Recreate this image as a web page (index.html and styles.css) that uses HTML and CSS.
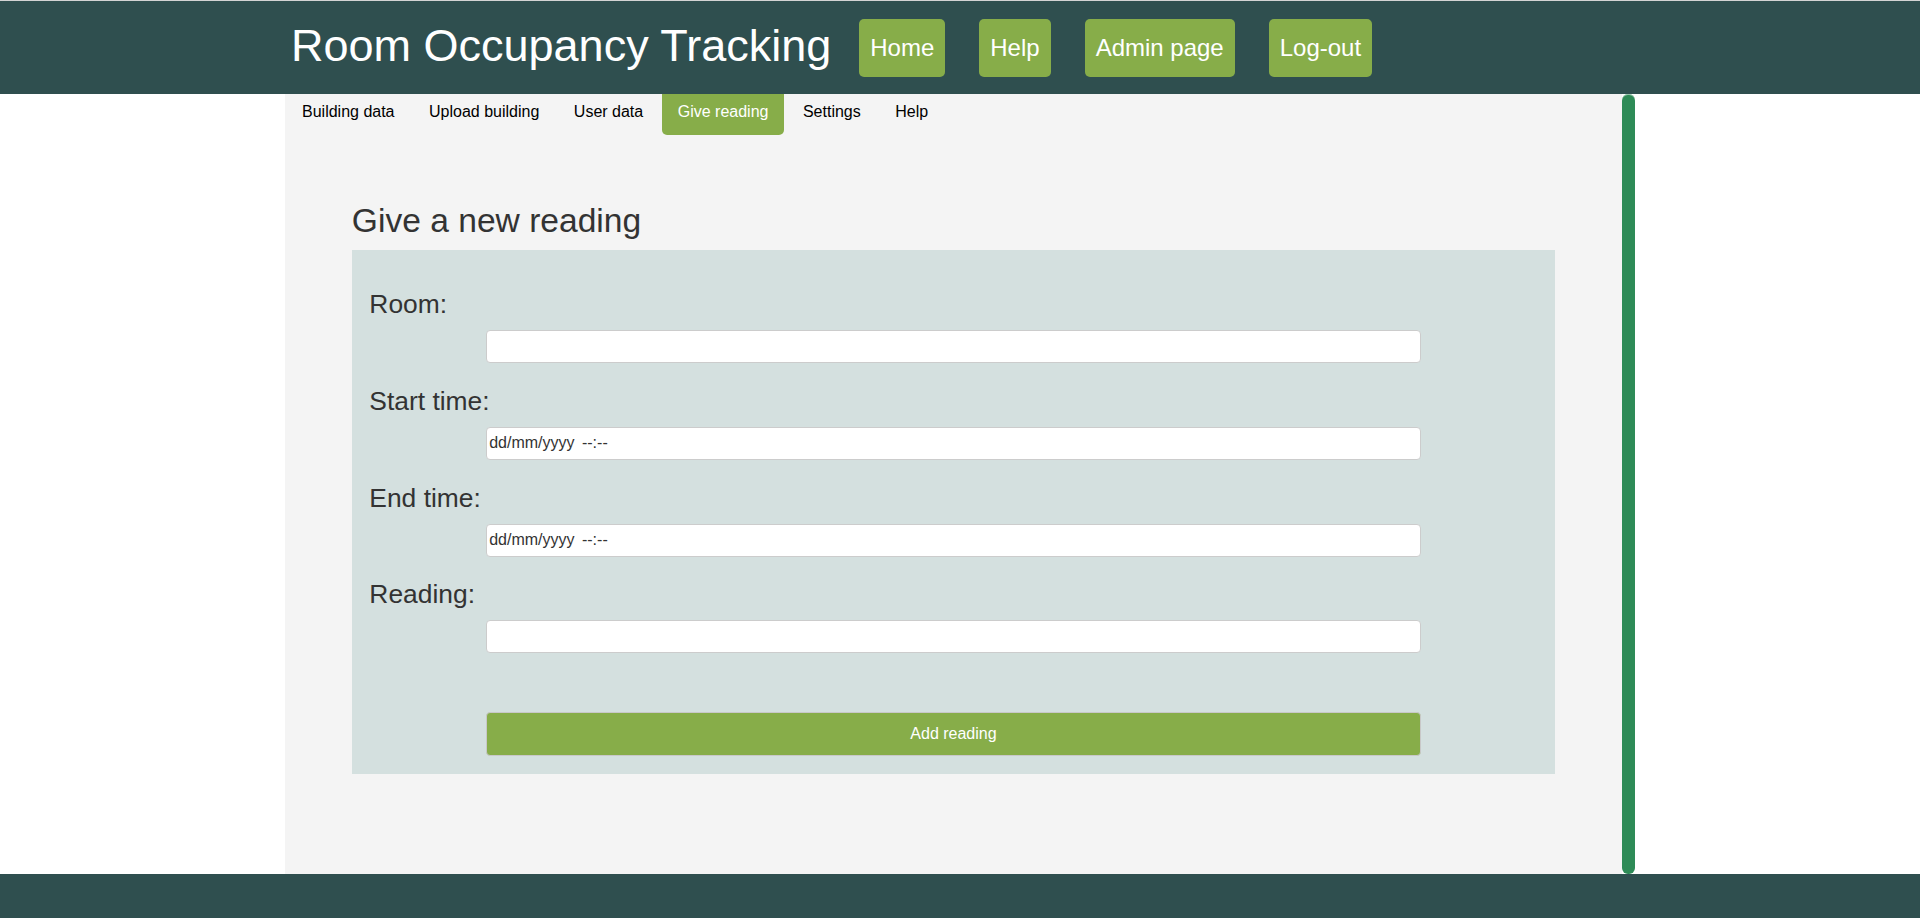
FILE: index.html
```html
<!DOCTYPE html>
<html lang="en">
<head>
<meta charset="utf-8">
<title>Room Occupancy Tracking</title>
<link rel="stylesheet" href="styles.css">
</head>
<body>
<header class="site-header">
  <div class="header-inner">
    <h1 class="site-title">Room Occupancy Tracking</h1>
    <nav class="main-nav">
      <a class="main-btn" href="#">Home</a>
      <a class="main-btn" href="#">Help</a>
      <a class="main-btn" href="#">Admin page</a>
      <a class="main-btn" href="#">Log-out</a>
    </nav>
  </div>
</header>
<main class="page">
  <div class="panel">
    <nav class="tabs">
      <a class="tab" href="#">Building data</a>
      <a class="tab" href="#">Upload building</a>
      <a class="tab" href="#">User data</a>
      <a class="tab active" href="#">Give reading</a>
      <a class="tab" href="#">Settings</a>
      <a class="tab" href="#">Help</a>
    </nav>
    <section class="reading">
      <h2 class="reading-title">Give a new reading</h2>
      <form class="reading-form">
        <label class="field-label">Room:</label>
        <input class="field" type="text">
        <label class="field-label">Start time:</label>
        <input class="field date" type="text" placeholder="dd/mm/yyyy --:--">
        <label class="field-label">End time:</label>
        <input class="field date" type="text" placeholder="dd/mm/yyyy --:--">
        <label class="field-label">Reading:</label>
        <input class="field" type="text">
        <button class="submit" type="button">Add reading</button>
      </form>
    </section>
  </div>
  <div class="scrollbar"></div>
</main>
<footer class="site-footer"></footer>
</body>
</html>
```

FILE: styles.css
```css
* { box-sizing: border-box; }
html, body { margin: 0; padding: 0; }
body {
  height: 100vh;
  display: flex;
  flex-direction: column;
  font-family: "Liberation Sans", Arial, sans-serif;
  background: #ffffff;
  color: #333333;
}
.site-header {
  height: 94px;
  flex: none;
  background: #2f4f4f;
  border-top: 1px solid #d4d4d4;
}
.header-inner {
  width: 1350px;
  margin: 0 auto;
  height: 100%;
  display: flex;
  align-items: center;
  padding-left: 6px;
}
.site-title {
  margin: 0 28px 0 0;
  font-size: 45px;
  font-weight: normal;
  color: #ffffff;
  line-height: 1.15;
  position: relative;
  top: -2px;
}
.main-nav {
  display: flex;
  gap: 34px;
}
.main-btn {
  display: block;
  padding: 15px 11px;
  font-size: 24px;
  line-height: 28px;
  color: #ffffff;
  text-decoration: none;
  background: #87ad49;
  border-radius: 5px;
}
.page {
  flex: 1;
  width: 1350px;
  margin: 0 auto;
  display: flex;
}
.panel {
  flex: 1;
  background: #f4f4f4;
}
.scrollbar {
  width: 13px;
  flex: none;
  background: #2e8b57;
  border-radius: 6px;
  box-shadow: inset 0 1px 0 rgba(255,255,255,0.5);
}
.tabs {
  display: flex;
  gap: 2.5px;
  padding-left: 1px;
  height: 41px;
}
.tab {
  display: block;
  padding: 8px 16px 14px;
  font-size: 16px;
  line-height: 19px;
  color: #000000;
  text-decoration: none;
  border-radius: 0 0 5px 5px;
}
.tab.active {
  background: #87ad49;
  color: #ffffff;
}
.reading {
  width: 90%;
  margin: 0 auto;
}
.reading-title {
  margin: 67px 0 9px;
  font-size: 33.6px;
  font-weight: normal;
  line-height: 38.5px;
  color: #333333;
}
.reading-form {
  background: #d4e0df;
  padding: 39.5px 17.5px 17.5px;
}
.field-label {
  display: block;
  font-size: 26.4px;
  line-height: 30.4px;
  color: #333333;
}
.field {
  display: block;
  width: 80%;
  height: 33px;
  margin: 10.7px auto 22.7px;
  border: 1px solid #cccccc;
  border-radius: 4px;
  background: #ffffff;
  padding: 0 2px;
  font-family: "Liberation Sans", Arial, sans-serif;
  font-size: 16px;
  color: #333333;
}
.field.date::placeholder {
  color: #333333;
  opacity: 1;
  word-spacing: 3px;
}
.submit {
  display: block;
  width: 80%;
  height: 44px;
  margin: 59px auto 0;
  border: 1px solid #c8c8c8;
  border-radius: 4px;
  background: #87ad49;
  color: #ffffff;
  font-family: "Liberation Sans", Arial, sans-serif;
  font-size: 16px;
}
.site-footer {
  height: 44px;
  flex: none;
  background: #2f4f4f;
}
```
